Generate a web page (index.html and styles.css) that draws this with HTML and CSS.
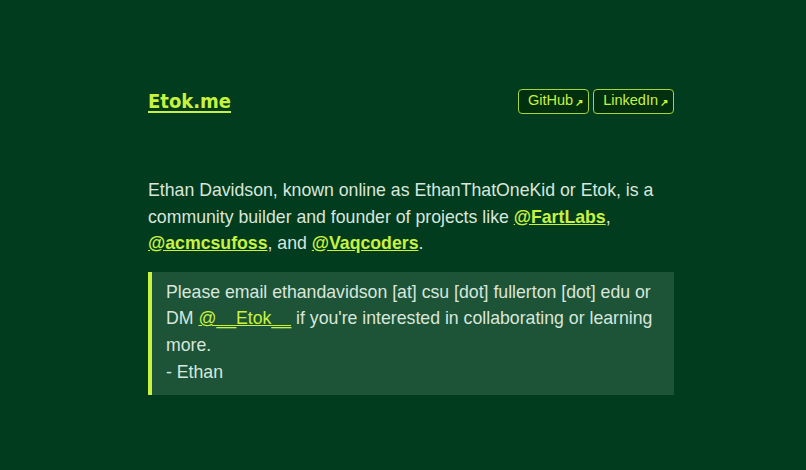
FILE: index.html
```html
<!DOCTYPE html>
<html lang="en">
<head>
    <meta charset="UTF-8">
    <meta name="viewport" content="width=device-width, initial-scale=1.0">
    <title>Etok.me</title>
    <link rel="stylesheet" href="styles.css">
</head>
<body>

    <main class="page">
        <header class="top">
            <a class="brand" href="#">Etok.me</a>
            <nav class="socials">
                <a class="social" href="#">GitHub<span class="arrow">↗</span></a>
                <a class="social" href="#">LinkedIn<span class="arrow">↗</span></a>
            </nav>
        </header>

        <p class="intro">
            Ethan Davidson, known online as EthanThatOneKid or Etok, is a
            community builder and founder of projects like <a class="strong-link" href="#">@FartLabs</a>,
            <a class="strong-link" href="#">@acmcsufoss</a>, and <a class="strong-link" href="#">@Vaqcoders</a>.
        </p>

        <blockquote class="note">
            Please email ethandavidson [at] csu [dot] fullerton [dot] edu or
            DM <a class="link" href="#">@__Etok__</a> if you're interested in collaborating or learning
            more.<br>
            - Ethan
        </blockquote>
    </main>

</body>
</html>
```

FILE: styles.css
```css
body {
    margin: 0;
    padding: 0 8px;
    background-color: #023c1e;
    color: #d9e6dc;
    font-family: "Liberation Sans", Arial, sans-serif;
    font-size: 17.7px;
    line-height: 1.5;
}
.page {
    max-width: 526px;
    margin: 0 auto;
    padding: 86px 0 0 16px;
}
.top {
    display: flex;
    justify-content: space-between;
    align-items: center;
}
.brand {
    font-family: "DejaVu Sans Condensed", "DejaVu Sans", sans-serif;
    font-weight: bold;
    font-size: 20px;
    color: #c8f23e;
    text-decoration: underline;
    text-underline-offset: 3px;
}
.socials {
    display: flex;
    gap: 4px;
}
.social {
    display: inline-flex;
    align-items: center;
    height: 23px;
    padding: 0 5px 0 9px;
    border: 1px solid #a8d43a;
    border-radius: 4px;
    background-color: #01300f;
    color: #c8f23e;
    font-size: 14.5px;
    text-decoration: none;
}
.arrow {
    font-size: 10px;
    font-weight: bold;
    margin-left: 2px;
    margin-top: 2px;
}
.intro {
    margin: 61px 0 15px;
}
.strong-link {
    font-weight: bold;
    color: #c8f23e;
}
.note {
    margin: 0;
    padding: 7px 14px 9px;
    line-height: 1.51;
    background-color: #1d5437;
    border-left: 4px solid #c8f23e;
}
.link {
    color: #c8f23e;
}
```
